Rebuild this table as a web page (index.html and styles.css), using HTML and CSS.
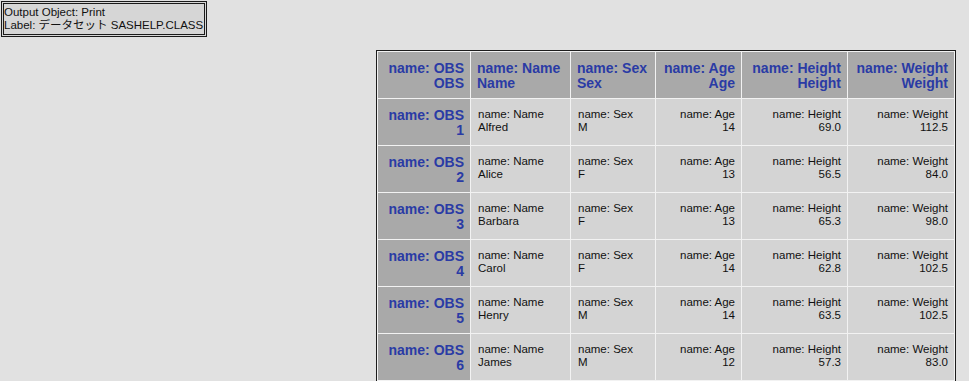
FILE: index.html
```html
<!DOCTYPE html>
<html>
<head>
<meta charset="utf-8">
<link rel="stylesheet" href="styles.css">
</head>
<body>
<div class="info">
  <div>Output Object: Print</div>
  <div>Label: データセット SASHELP.CLASS</div>
</div>
<table class="grid">
  <colgroup>
    <col class="c-obs"><col class="c-name"><col class="c-sex"><col class="c-age"><col class="c-height"><col class="c-weight">
  </colgroup>
  <thead>
    <tr>
      <th class="r">name: OBS<br>OBS</th>
      <th>name: Name<br>Name</th>
      <th>name: Sex<br>Sex</th>
      <th class="r">name: Age<br>Age</th>
      <th class="r">name: Height<br>Height</th>
      <th class="r">name: Weight<br>Weight</th>
    </tr>
  </thead>
  <tbody>
    <tr><th class="r">name: OBS<br>1</th><td>name: Name<br>Alfred</td><td>name: Sex<br>M</td><td class="r">name: Age<br>14</td><td class="r">name: Height<br>69.0</td><td class="r">name: Weight<br>112.5</td></tr>
    <tr><th class="r">name: OBS<br>2</th><td>name: Name<br>Alice</td><td>name: Sex<br>F</td><td class="r">name: Age<br>13</td><td class="r">name: Height<br>56.5</td><td class="r">name: Weight<br>84.0</td></tr>
    <tr><th class="r">name: OBS<br>3</th><td>name: Name<br>Barbara</td><td>name: Sex<br>F</td><td class="r">name: Age<br>13</td><td class="r">name: Height<br>65.3</td><td class="r">name: Weight<br>98.0</td></tr>
    <tr><th class="r">name: OBS<br>4</th><td>name: Name<br>Carol</td><td>name: Sex<br>F</td><td class="r">name: Age<br>14</td><td class="r">name: Height<br>62.8</td><td class="r">name: Weight<br>102.5</td></tr>
    <tr><th class="r">name: OBS<br>5</th><td>name: Name<br>Henry</td><td>name: Sex<br>M</td><td class="r">name: Age<br>14</td><td class="r">name: Height<br>63.5</td><td class="r">name: Weight<br>102.5</td></tr>
    <tr><th class="r">name: OBS<br>6</th><td>name: Name<br>James</td><td>name: Sex<br>M</td><td class="r">name: Age<br>12</td><td class="r">name: Height<br>57.3</td><td class="r">name: Weight<br>83.0</td></tr>
  </tbody>
</table>
</body>
</html>
```
FILE: styles.css
```css
html, body {
  margin: 0;
  padding: 0;
  background: #e1e1e1;
  font-family: "Liberation Sans", Arial, "Noto Sans CJK JP", sans-serif;
}

.info {
  display: block;
  width: max-content;
  margin: 1px 0 0 1px;
  padding: 4px 3px 4px 2px;
  border: 1px solid #1a1a1a;
  background: #d6d6d6;
  box-shadow: inset 0 0 0 1px #d6d6d6, inset 0 0 0 2px #1a1a1a;
  font-size: 11.5px;
  line-height: 13px;
  color: #111;
  white-space: nowrap;
}

.grid {
  margin: 13px 0 0 376px;
  border: 1px solid #1c1c1c;
  border-collapse: separate;
  border-spacing: 1px;
  background: #f2f2f2;
  table-layout: fixed;
  width: 580px;
}
.c-obs { width: 92px; }
.c-name { width: 99px; }
.c-sex { width: 84px; }
.c-age { width: 85px; }
.c-height { width: 105px; }
.c-weight { width: 106px; }

.grid th {
  background: #a9a9a9;
  color: #2a3ba5;
  font-weight: bold;
  font-size: 14px;
  line-height: 15px;
  padding: 8px 6px 7px 6px;
  height: 31px;
  text-align: left;
  vertical-align: middle;
}
.grid td {
  background: #d4d4d4;
  color: #111;
  font-size: 11.5px;
  line-height: 13px;
  padding: 0 6px 3px 7px;
  text-align: left;
  vertical-align: middle;
}
.grid .r { text-align: right; }
```
